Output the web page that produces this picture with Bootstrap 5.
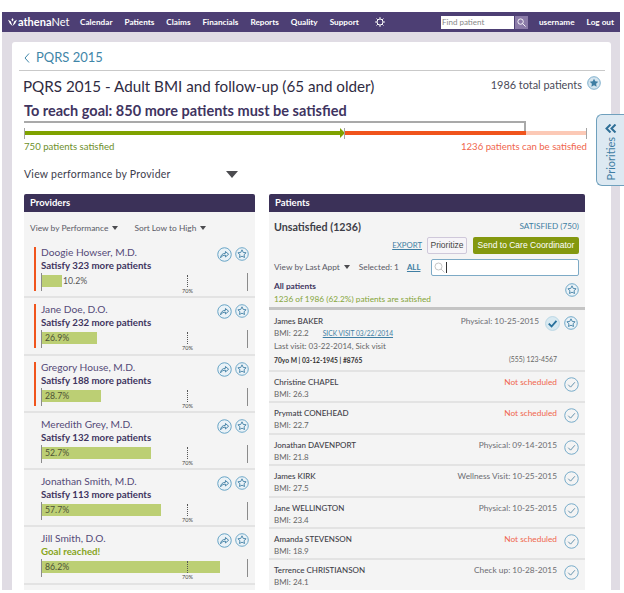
<!DOCTYPE html>
<html lang="en">
<head>
<meta charset="utf-8">
<title>PQRS 2015</title>
<link rel="stylesheet" href="https://cdn.jsdelivr.net/npm/bootstrap@5.3.0/dist/css/bootstrap.min.css">
<style>
html,body{height:593px;overflow:hidden;background:#fff}
body{font-family:Lato,"Noto Sans",sans-serif;color:#3f3f4a;font-size:10px;padding:12px 4px 0 2px;position:relative}
.app-bar{height:20px;background:#4d3f74;color:#fff;font-size:8.200px;font-weight:700;padding:0 6px 0 6px}
.app-logo{font-size:11px;font-weight:400;width:72px;gap:1px}
.app-logo b{font-weight:700}
.app-links{gap:12px;width:361px}
.find-box{width:73px;height:13px;background:#fff;color:#888;font-weight:400;font-size:8px;padding-left:1px;line-height:13px}
.find-btn{width:13px;height:13px;background:#8b7ba8;margin-left:1px}
.app-user{margin-right:12px}
.page-bg{background:#e0dce4;height:558px;overflow:hidden;padding:10px 9px 0 10px}
.sheet{background:#fff;height:548px;border-radius:3px 3px 0 0;padding:0 6px 0 7px}
.crumb{height:29px;border-bottom:1px solid #c9c9c9;color:#3f86a8;font-size:13px;padding:3px 0 0 5px;gap:6px;line-height:1}
.title-row{padding:3px 5px 0 4px;height:30px}
.title-txt{font-size:15.200px;color:#2f2b42;line-height:24px;white-space:nowrap}
.total-txt{font-size:10.900px;color:#4a4a58;line-height:18px;gap:5px;margin-top:2px;margin-right:-1px}
.goal-txt{font-size:14.500px;font-weight:700;color:#40345f;line-height:20px;padding-left:5px;white-space:nowrap}
.goal-track{height:19px;margin:0 0 0 5px;width:563px;position:relative}
.bracket{position:absolute;left:0;top:0;width:502px;height:13px;border-top:2px solid #a9a9a9;border-right:2px solid #a9a9a9}
.seg{position:absolute;top:10px;height:4px}
.tick{position:absolute;top:7px;width:1px;height:11px;background:#a5a5a5}
.seg-tri{position:absolute;left:316px;top:7px;width:0;height:0;border-left:5px solid #7fa200;border-top:5px solid transparent;border-bottom:5px solid transparent}
.lbl-row{font-size:9.600px;line-height:14px;width:563px;margin-left:5px}
.txt-good{color:#6d8f2b}
.txt-bad{color:#f0664d}
.view-row{width:214px;margin:12px 0 0 5px;font-size:10.500px;line-height:16px;color:#3d3d4c;letter-spacing:.25px}
.tri-lg{width:0;height:0;border-left:6px solid transparent;border-right:6px solid transparent;border-top:7px solid #4b4b4f}
.tri-sm{display:inline-block;width:0;height:0;border-left:3.500px solid transparent;border-right:3.500px solid transparent;border-top:4px solid #4b4b4f;margin-left:4px;vertical-align:1px}
.cols{gap:14px;margin:12px 0 0 5px}
.col-prov{width:231px;flex:none}
.col-pat{width:316px;flex:none}
.pane-head{height:18px;background:#3b3158;color:#fff;font-size:9.500px;font-weight:700;line-height:18px;padding-left:6px;border-radius:2px 2px 0 0}
.pane-body{background:#f4f4f4;height:378px;overflow:hidden}
.prov-filter{height:29px;padding:9px 0 0 6px;gap:16px;font-size:8.400px;color:#5a5a66;line-height:14px}
.prov-item{height:57.300px;position:relative;padding:5px 0 0 17px;border-bottom:2px solid #e3e3e3}
.prov-item.late:before{content:"";position:absolute;left:10px;top:6px;width:2px;height:44px;background:#f0541c}
.prov-name{font-size:10.200px;line-height:13px;color:#554a78}
.prov-need{font-size:9.700px;font-weight:700;line-height:13px;color:#40345f;white-space:nowrap}
.goal-met{color:#87a51c}
.prov-acts{position:absolute;right:6px;top:6px;gap:3px}
.bar-wrap{position:absolute;left:17px;top:32px;width:207px;height:18px;border-left:1px solid #8b8b8b}
.bar-fill{height:12px;margin-top:2px;background:#bccf74;font-size:8.700px;line-height:12px;color:#4d5234;padding-left:3px;white-space:nowrap}
.bar-out{position:absolute;top:2px;font-size:8.700px;line-height:12px;color:#555}
.mark-70{position:absolute;left:145px;top:2px;height:12px;border-left:1px dotted #555}
.lab-70{position:absolute;left:140px;top:15px;font-size:5.500px;line-height:6px;color:#444}
.end-line{position:absolute;right:0;top:0;width:1px;height:18px;background:#8b8b8b}
.pat-top{padding:6px 6px 0 5px;height:98px;border-bottom:3px solid #c4c4c4}
.uns-txt{font-size:10.700px;font-weight:700;color:#3e3e48;line-height:18px}
.sat-link{font-size:8.200px;color:#3f7ea3;line-height:16px}
.tool-row{gap:5px;height:19px}
.ln{color:#3f7ea3;text-decoration:underline;font-size:7.800px}
.btn.btn-prio{height:17px;width:40px;padding:0;font:8.500px/15px "Liberation Sans",sans-serif;color:#444;background:#f6f4f8;border:1px solid #cfc8da;border-radius:2px}
.btn.btn-send{height:17px;width:106px;padding:0;font:8.500px/17px "Liberation Sans",sans-serif;color:#fff;background:#84980f;border:0;border-radius:2px;margin-left:1px}
.filt-row{height:17px;margin-top:4px;font-size:8.300px;color:#5a5a66;line-height:17px}
.filt-row .ln{margin-left:8px;font-weight:700}
.filt-sel{margin-left:9px}
.srch{width:148px;height:17px;background:#fff;border:1px solid #7daac6;border-radius:2px;gap:1px;padding-left:2px}
.caret-bar{width:1px;height:11px;background:#333}
.all-row{margin-top:4px}
.all-ttl{font-size:8.300px;font-weight:700;line-height:13px;color:#40345f}
.all-sub{font-size:8.300px;line-height:13px;color:#84a53a}
.all-ic{margin-top:3px}
.pat-row{height:31.400px;position:relative;padding:4px 8px 0 5px;border-bottom:2px solid #e3e3e3}
.pat-row.open{height:62px;padding-top:5px}
.pat-name{font-size:8px;line-height:12px;color:#3e3e48;font-weight:500}
.pat-sub{font-size:8px;line-height:12px;color:#666}
.pat-last{margin-top:1px}
.pat-when{position:absolute;right:28px;top:4px;font-size:8.300px;line-height:12px;color:#6c6c72}
.pat-when.none{color:#f0664d}
.pat-acts{position:absolute;right:6px;top:5px;gap:4px}
.pat-row.open .pat-when{right:46px;top:5px}
.pat-row.open .pat-acts{right:7px;top:6px}
.tiny-ln{font-size:6.700px;margin-left:14px}
.fine-l{font-size:6.700px;font-weight:700;line-height:11px;color:#333;margin-top:3px}
.fine-r{position:absolute;right:28px;bottom:5px;font-size:6.900px;line-height:11px;color:#666}
.prio-tab{position:absolute;right:0;top:114px;width:28px;height:72px;padding-top:9px;background:#dde9f2;border:1px solid #6fa0bd;border-right:0;border-radius:6px 0 0 6px;color:#3d7da3}
.prio-tab span{writing-mode:vertical-rl;transform:rotate(180deg);font-size:11px;line-height:14px;margin-top:4px}
</style>
</head>
<body>
<svg width="0" height="0" class="position-absolute">
<defs>
<symbol id="i-star" viewBox="0 0 16 16"><circle cx="8" cy="8" r="7.200" fill="#eaf2f7" stroke="#5f9fc2" stroke-width="1"/><path d="M8 3.200l1.400 3 3.300.4-2.400 2.200.6 3.200L8 10.500l-2.900 1.500.6-3.200-2.400-2.200 3.300-.4z" fill="none" stroke="#3f7ea3" stroke-width="1" stroke-linejoin="round"/></symbol>
<symbol id="i-starf" viewBox="0 0 16 16"><circle cx="8" cy="8" r="7.200" fill="#d5e5ef" stroke="#6fa6c6" stroke-width="1"/><path d="M8 3l1.500 3.100 3.400.5-2.500 2.300.6 3.400L8 10.700l-3 1.600.6-3.400-2.500-2.300 3.400-.5z" fill="#3f7ea3"/></symbol>
<symbol id="i-share" viewBox="0 0 16 16"><circle cx="8" cy="8" r="7.200" fill="#eaf2f7" stroke="#5f9fc2" stroke-width="1"/><path d="M3.800 11.500c.3-3 2.300-4.800 5.200-4.800V4.800l3.400 2.900-3.400 2.900V8.700c-2.200-.1-3.800.8-5.200 2.800z" fill="none" stroke="#3f7ea3" stroke-width="1" stroke-linejoin="round"/></symbol>
<symbol id="i-check" viewBox="0 0 16 16"><circle cx="8" cy="8" r="7.200" fill="none" stroke="#6fa6c6" stroke-width="1"/><path d="M4.500 8.200l2.500 2.600 4.600-5.200" fill="none" stroke="#5d8ca8" stroke-width="1"/></symbol>
<symbol id="i-checkon" viewBox="0 0 16 16"><circle cx="8" cy="8" r="7.400" fill="#d8e9f1" stroke="#b9d5e3" stroke-width="1"/><path d="M4 8.200l3 3 5.200-6" fill="none" stroke="#28709c" stroke-width="2"/></symbol>
</defs>
</svg>

<nav class="app-bar d-flex align-items-center">
  <div class="app-logo d-flex align-items-center">
    <svg width="9" height="9" viewBox="0 0 10 10"><path d="M0 2l3 1.500L5 9 2 6zM10 2L7 3.500 5 9l3-3zM5 0l1.200 2L5 4 3.800 2z" fill="#fff"/></svg>
    <span><b>athena</b>Net</span>
  </div>
  <div class="app-links d-flex align-items-center">
    <span>Calendar</span><span>Patients</span><span>Claims</span><span>Financials</span><span>Reports</span><span>Quality</span><span>Support</span>
    <svg width="10" height="10" viewBox="0 0 10 10" class="ms-1"><circle cx="5" cy="5" r="3" fill="none" stroke="#fff" stroke-width="1"/><path d="M5 0v2M5 8v2M0 5h2M8 5h2M1.500 1.500l1.400 1.400M7.100 7.100l1.400 1.400M8.500 1.500L7.100 2.900M2.900 7.100L1.500 8.500" stroke="#fff" stroke-width=".9"/></svg>
  </div>
  <div class="find-box">Find patient</div>
  <div class="find-btn d-flex align-items-center justify-content-center">
    <svg width="9" height="9" viewBox="0 0 10 10"><circle cx="4" cy="4" r="3" fill="none" stroke="#fff"/><path d="M6.200 6.200L9.500 9.500" stroke="#fff"/></svg>
  </div>
  <span class="ms-auto app-user">username</span>
  <span>Log out</span>
</nav>

<div class="page-bg">
  <div class="sheet">
    <div class="crumb d-flex align-items-center">
      <svg width="6" height="10" viewBox="0 0 6 10"><path d="M5 .5L1 5l4 4.500" fill="none" stroke="#3f86a8"/></svg>
      <span>PQRS 2015</span>
    </div>
    <div class="title-row d-flex justify-content-between">
      <div class="title-txt">PQRS 2015 - Adult BMI and follow-up (65 and older)</div>
      <div class="total-txt d-flex align-items-start">1986 total patients <svg width="14" height="14" class="mt-0"><use href="#i-starf"/></svg></div>
    </div>
    <div class="goal-txt">To reach goal: 850 more patients must be satisfied</div>
    <div class="goal-track">
      <div class="bracket"></div>
      <div class="seg" style="left:0;width:316px;background:#7fa200"></div>
      <div class="seg-tri"></div>
      <div class="seg" style="left:321px;width:181px;background:#f0541c"></div>
      <div class="seg" style="left:502px;width:60px;background:#fcc9b6"></div>
      <div class="tick" style="left:0"></div>
      <div class="tick" style="left:320px"></div>
      <div class="tick" style="left:562px"></div>
    </div>
    <div class="lbl-row d-flex justify-content-between"><span class="txt-good">750 patients satisfied</span><span class="txt-bad">1236 patients can be satisfied</span></div>
    <div class="view-row d-flex justify-content-between align-items-center"><span>View performance by Provider</span><span class="tri-lg"></span></div>

    <div class="cols d-flex">
      <section class="col-prov">
        <div class="pane-head">Providers</div>
        <div class="pane-body">
          <div class="prov-filter d-flex"><span>View by Performance<i class="tri-sm"></i></span><span>Sort Low to High<i class="tri-sm"></i></span></div>

          <div class="prov-item late">
            <div class="prov-name">Doogie Howser, M.D.</div><div class="prov-need">Satisfy 323 more patients</div>
            <div class="prov-acts d-flex"><svg width="15" height="15"><use href="#i-share"/></svg><svg width="14" height="14"><use href="#i-star"/></svg></div>
            <div class="bar-wrap"><div class="bar-fill" style="width:20px"></div><span class="bar-out" style="left:21px">10.2%</span><i class="mark-70"></i><span class="lab-70">70%</span><i class="end-line"></i></div>
          </div>
          <div class="prov-item late">
            <div class="prov-name">Jane Doe, D.O.</div><div class="prov-need">Satisfy 232 more patients</div>
            <div class="prov-acts d-flex"><svg width="15" height="15"><use href="#i-share"/></svg><svg width="14" height="14"><use href="#i-star"/></svg></div>
            <div class="bar-wrap"><div class="bar-fill" style="width:55px">26.9%</div><i class="mark-70"></i><span class="lab-70">70%</span><i class="end-line"></i></div>
          </div>
          <div class="prov-item late">
            <div class="prov-name">Gregory House, M.D.</div><div class="prov-need">Satisfy 188 more patients</div>
            <div class="prov-acts d-flex"><svg width="15" height="15"><use href="#i-share"/></svg><svg width="14" height="14"><use href="#i-star"/></svg></div>
            <div class="bar-wrap"><div class="bar-fill" style="width:59px">28.7%</div><i class="mark-70"></i><span class="lab-70">70%</span><i class="end-line"></i></div>
          </div>
          <div class="prov-item">
            <div class="prov-name">Meredith Grey, M.D.</div><div class="prov-need">Satisfy 132 more patients</div>
            <div class="prov-acts d-flex"><svg width="15" height="15"><use href="#i-share"/></svg><svg width="14" height="14"><use href="#i-star"/></svg></div>
            <div class="bar-wrap"><div class="bar-fill" style="width:109px">52.7%</div><i class="mark-70"></i><span class="lab-70">70%</span><i class="end-line"></i></div>
          </div>
          <div class="prov-item">
            <div class="prov-name">Jonathan Smith, M.D.</div><div class="prov-need">Satisfy 113 more patients</div>
            <div class="prov-acts d-flex"><svg width="15" height="15"><use href="#i-share"/></svg><svg width="14" height="14"><use href="#i-star"/></svg></div>
            <div class="bar-wrap"><div class="bar-fill" style="width:119px">57.7%</div><i class="mark-70"></i><span class="lab-70">70%</span><i class="end-line"></i></div>
          </div>
          <div class="prov-item">
            <div class="prov-name">Jill Smith, D.O.</div><div class="prov-need goal-met">Goal reached!</div>
            <div class="prov-acts d-flex"><svg width="15" height="15"><use href="#i-share"/></svg><svg width="14" height="14"><use href="#i-star"/></svg></div>
            <div class="bar-wrap"><div class="bar-fill" style="width:178px">86.2%</div><i class="mark-70"></i><span class="lab-70">70%</span><i class="end-line"></i></div>
          </div>
        </div>
      </section>

      <section class="col-pat">
        <div class="pane-head">Patients</div>
        <div class="pane-body">
          <div class="pat-top">
            <div class="d-flex justify-content-between"><span class="uns-txt">Unsatisfied (1236)</span><span class="sat-link">SATISFIED (750)</span></div>
            <div class="tool-row d-flex justify-content-end align-items-center"><a class="ln" href="#">EXPORT</a><button class="btn btn-prio">Prioritize</button><button class="btn btn-send">Send to Care Coordinator</button></div>
            <div class="filt-row d-flex"><span>View by Last Appt<i class="tri-sm"></i></span><span class="filt-sel">Selected: 1</span><a class="ln" href="#">ALL</a>
              <div class="srch ms-auto d-flex align-items-center"><svg width="11" height="11" viewBox="0 0 11 11"><circle cx="4.500" cy="4.500" r="3.500" fill="none" stroke="#c5c5c5"/><path d="M7 7l3.500 3.500" stroke="#c5c5c5"/></svg><i class="caret-bar"></i></div>
            </div>
            <div class="all-row d-flex justify-content-between"><div><div class="all-ttl">All patients</div><div class="all-sub">1236 of 1986 (62.2%) patients are satisfied</div></div><svg width="14" height="14" class="all-ic"><use href="#i-star"/></svg></div>
          </div>

          <div class="pat-row open">
            <div class="pat-name">James BAKER</div>
            <div class="pat-sub">BMI: 22.2<a class="ln tiny-ln" href="#">SICK VISIT 03/22/2014</a></div>
            <div class="pat-sub pat-last">Last visit: 03-22-2014, Sick visit</div>
            <div class="fine-l">70yo M | 03-12-1945 | #8765</div>
            <div class="pat-when">Physical: 10-25-2015</div>
            <div class="fine-r">(555) 123-4567</div>
            <div class="pat-acts d-flex"><svg width="15" height="15"><use href="#i-checkon"/></svg><svg width="14" height="14"><use href="#i-star"/></svg></div>
          </div>
          <div class="pat-row"><div class="pat-name">Christine CHAPEL</div><div class="pat-sub">BMI: 26.3</div><div class="pat-when none">Not scheduled</div><div class="pat-acts d-flex"><svg width="15" height="15"><use href="#i-check"/></svg></div></div>
          <div class="pat-row"><div class="pat-name">Prymatt CONEHEAD</div><div class="pat-sub">BMI: 22.7</div><div class="pat-when none">Not scheduled</div><div class="pat-acts d-flex"><svg width="15" height="15"><use href="#i-check"/></svg></div></div>
          <div class="pat-row"><div class="pat-name">Jonathan DAVENPORT</div><div class="pat-sub">BMI: 21.8</div><div class="pat-when">Physical: 09-14-2015</div><div class="pat-acts d-flex"><svg width="15" height="15"><use href="#i-check"/></svg></div></div>
          <div class="pat-row"><div class="pat-name">James KIRK</div><div class="pat-sub">BMI: 27.5</div><div class="pat-when">Wellness Visit: 10-25-2015</div><div class="pat-acts d-flex"><svg width="15" height="15"><use href="#i-check"/></svg></div></div>
          <div class="pat-row"><div class="pat-name">Jane WELLINGTON</div><div class="pat-sub">BMI: 23.4</div><div class="pat-when">Physical: 10-25-2015</div><div class="pat-acts d-flex"><svg width="15" height="15"><use href="#i-check"/></svg></div></div>
          <div class="pat-row"><div class="pat-name">Amanda STEVENSON</div><div class="pat-sub">BMI: 18.9</div><div class="pat-when none">Not scheduled</div><div class="pat-acts d-flex"><svg width="15" height="15"><use href="#i-check"/></svg></div></div>
          <div class="pat-row"><div class="pat-name">Terrence CHRISTIANSON</div><div class="pat-sub">BMI: 24.1</div><div class="pat-when">Check up: 10-28-2015</div><div class="pat-acts d-flex"><svg width="15" height="15"><use href="#i-check"/></svg></div></div>
        </div>
      </section>
    </div>
  </div>
</div>

<aside class="prio-tab d-flex flex-column align-items-center">
  <svg width="12" height="9" viewBox="0 0 12 9"><path d="M5.500 .5L1.500 4.500l4 4M10.500 .5l-4 4 4 4" fill="none" stroke="#2f6f97" stroke-width="2"/></svg>
  <span>Priorities</span>
</aside>
</body>
</html>
